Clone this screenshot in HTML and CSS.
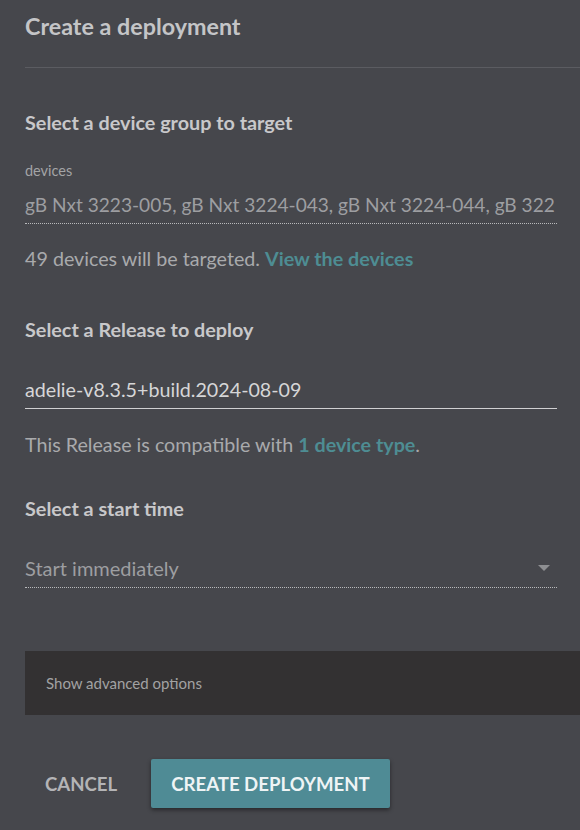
FILE: index.html
```html
<!DOCTYPE html>
<html>
<head>
<meta charset="utf-8">
<link rel="stylesheet" href="styles.css">
</head>
<body>
<div class="dialog">
  <div class="header">
    <h1 class="title">Create a deployment</h1>
  </div>
  <div class="content">
    <h2 class="heading h-first">Select a device group to target</h2>
    <div class="label">devices</div>
    <div class="field field-disabled field-devices">gB Nxt 3223-005, gB Nxt 3224-043, gB Nxt 3224-044, gB 322</div>
    <p class="helper helper-1">49 devices will be targeted. <a class="link">View the devices</a></p>

    <h2 class="heading h-second">Select a Release to deploy</h2>
    <div class="field field-active">adelie-v8.3.5+build.2024-08-09</div>
    <p class="helper helper-2">This Release is compatible with <a class="link">1 device type</a>.</p>

    <h2 class="heading h-third">Select a start time</h2>
    <div class="field field-disabled field-select">
      <span>Start immediately</span>
      <span class="caret"></span>
    </div>
  </div>
  <div class="advanced">Show advanced options</div>
  <div class="actions">
    <button class="btn btn-flat">CANCEL</button>
    <button class="btn btn-raised">CREATE DEPLOYMENT</button>
  </div>
</div>
</body>
</html>
```
FILE: styles.css
```css
html, body {
  margin: 0;
  padding: 0;
  background: #46474c;
}
body {
  font-family: Lato, "Open Sans", sans-serif;
  width: 580px;
  height: 830px;
  overflow: hidden;
}
.dialog {
  padding-left: 25px;
}
.header {
  padding: 11px 0 26px;
  border-bottom: 1px solid #5b5c61;
}
.title {
  margin: 0;
  font-size: 23.3px;
  line-height: 30px;
  font-weight: 700;
  color: #c4c5c7;
}
.content {
  padding-right: 23px;
}
.heading {
  margin: 0;
  font-size: 19.8px;
  line-height: 24px;
  font-weight: 700;
  color: #c8c8ca;
}
.h-first { margin-top: 42px; }
.h-second { margin-top: 46px; }
.h-third { margin-top: 39px; }
.label {
  margin-top: 29px;
  font-size: 14.5px;
  line-height: 16px;
  color: #a3a4a6;
}
.field {
  font-size: 19.7px;
  line-height: 24px;
  padding-bottom: 7px;
  white-space: nowrap;
  overflow: hidden;
}
.field-disabled {
  color: #9d9ea1;
  border-bottom: 1px dotted #b9babc;
}
.field-devices {
  margin-top: 14px;
  padding-bottom: 6px;
  font-size: 19.1px;
}
.h-second + .field { margin-top: 37px; }
.field-active {
  color: #d6d6d7;
  padding-bottom: 6px;
  border-bottom: 1px solid #d0d0d2;
}
.field-select {
  margin-top: 36px;
  font-size: 20px;
  display: flex;
  justify-content: space-between;
  align-items: center;
}
.caret {
  width: 0;
  height: 0;
  margin-right: 7px;
  border-left: 6px solid transparent;
  border-right: 6px solid transparent;
  border-top: 6px solid #8e8f92;
}
.helper {
  margin: 23px 0 0;
  font-size: 19.7px;
  line-height: 24px;
  color: #a9aaac;
}
.helper-2 { margin-top: 24px; }
.link {
  color: #4e8d93;
  font-weight: 700;
}
.advanced {
  margin-top: 63px;
  height: 64px;
  display: flex;
  align-items: center;
  padding-left: 21px;
  background: #333132;
  font-size: 15px;
  line-height: 16px;
  color: #a2a2a3;
}
.actions {
  margin-top: 44px;
  display: flex;
  gap: 14px;
}
.btn {
  font-family: Lato, "Open Sans", sans-serif;
  font-size: 18.6px;
  line-height: 24px;
  font-weight: 700;
  height: 49px;
  border: none;
  border-radius: 2px;
  padding: 0 20px;
  cursor: pointer;
}
.btn-flat {
  background: transparent;
  color: #b4b4b6;
}
.btn-raised {
  padding: 0 20px;
  background: #4f8b95;
  color: #eef4f5;
  box-shadow: 0 2px 4px rgba(0, 0, 0, 0.45);
}
```
